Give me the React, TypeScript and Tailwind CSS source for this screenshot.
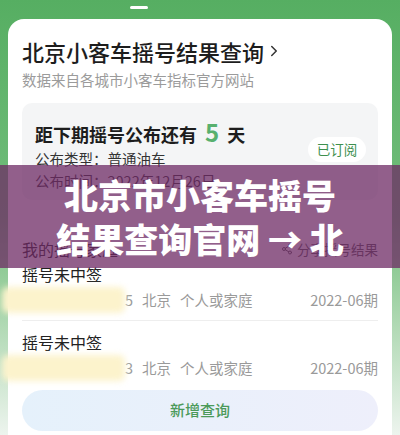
import { ChevronRight, Share2 } from "lucide-react";

const FONT = { fontFamily: '"Noto Sans CJK SC", "Noto Sans", sans-serif' };

function ResultRow({ tail, title }: { tail: string; title: string }) {
  return (
    <div>
      <p className="text-[16px] leading-[22px] text-[#222]">{title}</p>
      <div className="relative mt-[5px] flex items-center text-[14.5px] leading-[20px] text-[#9a9a9a]">
        {/* 号码打码 */}
        <span className="absolute -left-[20px] -top-[3px] h-[26px] w-[123px] rounded-md bg-[#fcf3cc] blur-[3px]" />
        <span className="w-[103px]" />
        <span>{tail}</span>
        <span className="ml-[9px]">北京</span>
        <span className="ml-[9px]">个人或家庭</span>
        <span className="ml-auto">2022-06期</span>
      </div>
    </div>
  );
}

export default function App() {
  return (
    <div
      style={FONT}
      className="relative h-[435px] w-[400px] overflow-hidden bg-gradient-to-b from-[#56ae62] via-[#72be7c] to-[#edf4ee]"
    >
      <div className="ml-[130px] pt-[6px]">
        <div className="h-[3px] w-[18px] rounded-full bg-white" />
      </div>

      <div className="mx-2 mt-[10px] h-[430px] rounded-t-[16px] bg-white px-[14px] pt-[18px]">
        <div className="flex items-center text-[22px] font-medium leading-[28px] text-[#1d1d1d]">
          北京小客车摇号结果查询
          <ChevronRight size={18} strokeWidth={2} className="ml-[1px] text-[#333]" />
        </div>
        <p className="mt-[5px] text-[14.5px] leading-[20px] text-[#9b9b9b]">
          数据来自各城市小客车指标官方网站
        </p>

        <div className="mt-[13px] flex items-start rounded-[10px] bg-[#f4f5f6] pb-[9px] pl-[13px] pr-[12px] pt-[17px]">
          <div className="flex-1">
            <div className="flex items-baseline text-[18px] font-bold leading-[24px] text-[#1d1d1d]">
              距下期摇号公布还有
              <span className="mx-[8px] text-[24px] font-semibold leading-[24px] text-[#58b06e]">5</span>
              天
            </div>
            <p className="mt-[3px] text-[14.5px] leading-[20px] text-[#333]">公布类型：普通油车</p>
            <p className="mt-[2px] text-[14.5px] leading-[20px] text-[#333]">公布时间：2022年12月26日</p>
          </div>
          <span className="mt-[17px] flex h-[25px] w-[58px] items-center justify-center rounded-full bg-white text-[13.5px] text-[#3e8f4f]">
            已订阅
          </span>
        </div>

        <div className="mt-[38px] flex items-center leading-[22px]">
          <span className="text-[16px] text-[#222]">我的摇号家庭</span>
          <span className="ml-auto flex items-center text-[13.5px] text-[#555]">
            <Share2 size={12} className="mr-[4px]" />
            分享摇号结果
          </span>
        </div>

        <div className="mt-[3px]">
          <ResultRow title="摇号未中签" tail="5" />
        </div>
        <div className="my-[10px] h-px bg-[#eeeeee]" />
        <ResultRow title="摇号未中签" tail="3" />

        <button
          type="button"
          className="mt-[12px] flex h-[41px] w-full items-center justify-center rounded-full bg-gradient-to-r from-[#e5f1fb] to-[#eeeffb] text-[15px] font-medium text-[#4b9a5a]"
        >
          新增查询
        </button>
      </div>

      {/* 文章标题横幅 */}
      <div className="absolute inset-x-0 top-[165px] flex h-[103px] items-center justify-center bg-[#6e2a64]/75">
        <p className="text-center text-[34px] font-black leading-[44px] text-white">
          北京市小客车摇号
          <br />
          结果查询官网 → 北
        </p>
      </div>
    </div>
  );
}
